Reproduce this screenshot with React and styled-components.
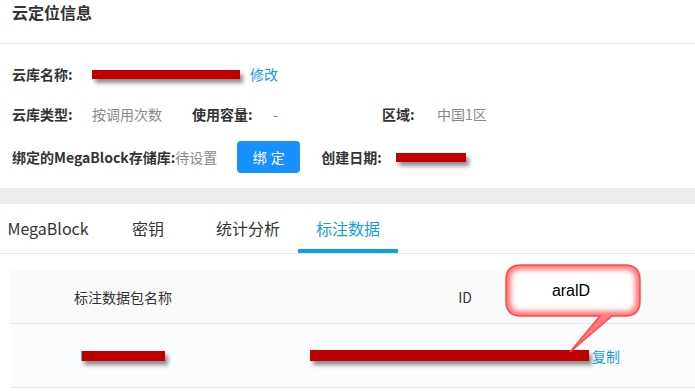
import React from "react";
import styled, { createGlobalStyle } from "styled-components";

const GlobalStyle = createGlobalStyle`
  body {
    margin: 0;
    background: #fff;
    font-family: "Noto Sans CJK SC", "Noto Sans", sans-serif;
    color: #333;
  }
`;

const Page = styled.div`
  position: relative;
  width: 695px;
  height: 391px;
  overflow: hidden;
`;

const TitleBar = styled.div`
  height: 43px;
  padding: 0 12px;
  font-size: 16px;
  font-weight: bold;
  line-height: 25px;
  border-bottom: 1px solid #e8e8e8;
`;

const InfoBody = styled.div`
  padding: 10px 12px 8px;
`;

const Row = styled.div`
  display: flex;
  align-items: center;
  height: ${(p) => p.height || 40}px;
  font-size: 14px;
`;

const Field = styled.div`
  display: flex;
  align-items: center;
  width: ${(p) => (p.width ? `${p.width}px` : "auto")};
  margin-left: ${(p) => p.gap || 0}px;
`;

const Label = styled.span`
  font-weight: bold;
  color: #333;
  width: ${(p) => (p.width ? `${p.width}px` : "auto")};
  white-space: nowrap;
`;

const Value = styled.span`
  color: #888;
  white-space: nowrap;
`;

const Link = styled.a`
  color: #1a9be8;
  margin-left: ${(p) => p.gap || 0}px;
  cursor: pointer;
  font-size: 14px;
`;

const Redacted = styled.span`
  display: inline-block;
  width: ${(p) => p.w}px;
  height: ${(p) => p.h || 9}px;
  background: #c00000;
  box-shadow: 3px 4px 4px rgba(0, 0, 0, 0.45);
  border-left: ${(p) => (p.outline ? "1px solid #5aa9e6" : "none")};
`;

const BindButton = styled.button`
  margin-left: 20px;
  width: 63px;
  height: 32px;
  border: none;
  border-radius: 4px;
  background: #1890ff;
  color: #fff;
  font-family: inherit;
  font-size: 14px;
  letter-spacing: 4px;
  padding: 0 0 0 4px;
`;

const Band = styled.div`
  height: 16px;
  background: #ededed;
`;

const TabBar = styled.div`
  display: flex;
  height: 49px;
  border-bottom: 1px solid #e8e8e8;
  margin-left: -2px;
`;

const Tab = styled.div`
  width: 100px;
  height: 49px;
  line-height: 48px;
  text-align: center;
  font-size: 16px;
  color: ${(p) => (p.active ? "#1a9be8" : "#333")};
  box-shadow: ${(p) => (p.active ? "inset 0 -4px 0 #0ea0e6" : "none")};
`;

const TableWrap = styled.div`
  padding: 16px 0 0 11px;
`;

const Table = styled.div`
  display: flex;
  flex-direction: column;
`;

const TRow = styled.div`
  display: flex;
  align-items: center;
  height: ${(p) => p.height}px;
  background: ${(p) => (p.head ? "#fafafa" : "#fbfcfe")};
  border-bottom: 1px solid #e6e6e6;
  font-size: 14px;
`;

const Cell = styled.div`
  width: ${(p) => p.width}px;
  flex-shrink: 0;
  display: flex;
  align-items: center;
  justify-content: center;
  color: #333;
`;

const Callout = styled.svg`
  position: absolute;
  left: 500px;
  top: 260px;
  overflow: visible;
`;

const tabs = ["MegaBlock", "密钥", "统计分析", "标注数据"];

const bubble =
  "M 21 5 H 125 Q 140 5 140 20 V 41 Q 140 56 125 56 H 112 L 70 92 L 100 56 H 21 Q 6 56 6 41 V 20 Q 6 5 21 5 Z";

export default function App() {
  return (
    <Page>
      <GlobalStyle />
      <TitleBar>云定位信息</TitleBar>
      <InfoBody>
        <Row>
          <Label width={80}>云库名称:</Label>
          <Redacted w={148} />
          <Link gap={10}>修改</Link>
        </Row>
        <Row>
          <Field width={180}>
            <Label width={80}>云库类型:</Label>
            <Value>按调用次数</Value>
          </Field>
          <Field width={190}>
            <Label width={81}>使用容量:</Label>
            <Value>-</Value>
          </Field>
          <Field>
            <Label width={55}>区域:</Label>
            <Value>中国1区</Value>
          </Field>
        </Row>
        <Row height={46}>
          <Label>绑定的MegaBlock存储库:</Label>
          <Value>待设置</Value>
          <BindButton>绑定</BindButton>
          <Field gap={21}>
            <Label width={75}>创建日期:</Label>
            <Redacted w={70} />
          </Field>
        </Row>
      </InfoBody>
      <Band />
      <TabBar>
        {tabs.map((t, i) => (
          <Tab key={t} active={i === 3}>
            {t}
          </Tab>
        ))}
      </TabBar>
      <TableWrap>
        <Table>
          <TRow head height={53}>
            <Cell width={224}>标注数据包名称</Cell>
            <Cell width={460}>ID</Cell>
          </TRow>
          <TRow height={63}>
            <Cell width={224}>
              <Redacted w={83} h={10} outline />
            </Cell>
            <Cell width={460}>
              <Redacted w={279} h={11} />
              <Link gap={3}>复制</Link>
            </Cell>
          </TRow>
        </Table>
      </TableWrap>
      <Callout width="150" height="100" viewBox="0 0 150 100">
        <defs>
          <clipPath id="bubbleClip">
            <path d={bubble} />
          </clipPath>
          <filter id="soft" x="-20%" y="-20%" width="140%" height="140%">
            <feGaussianBlur stdDeviation="2.5" />
          </filter>
        </defs>
        <path d={bubble} fill="#fff" />
        <g clipPath="url(#bubbleClip)">
          <path
            d={bubble}
            fill="none"
            stroke="#ff7a7a"
            strokeWidth="10"
            filter="url(#soft)"
          />
        </g>
        <path d={bubble} fill="none" stroke="#ff4a4a" strokeWidth="1.5" />
        <text
          x="71"
          y="36"
          textAnchor="middle"
          fontFamily="'Liberation Sans', Arial, sans-serif"
          fontSize="16"
          fill="#000"
        >
          aralD
        </text>
      </Callout>
    </Page>
  );
}
